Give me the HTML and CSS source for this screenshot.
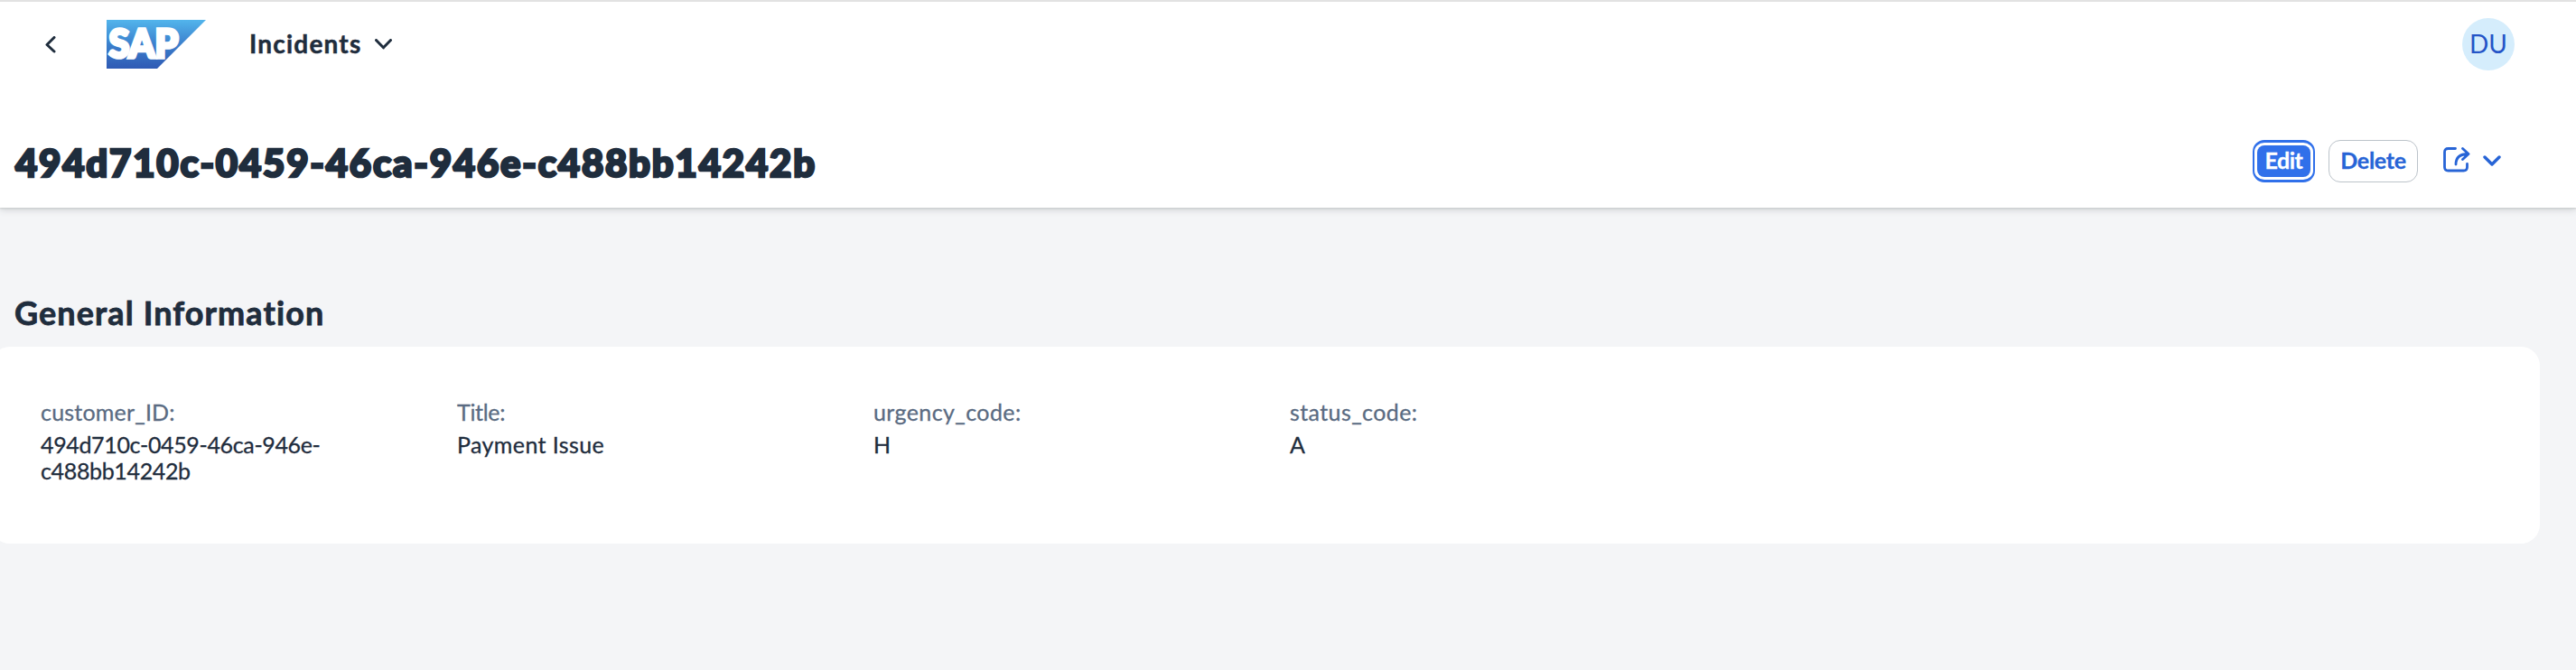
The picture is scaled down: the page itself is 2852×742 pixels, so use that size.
FILE: index.html
```html
<!DOCTYPE html>
<html lang="en">
<head>
<meta charset="utf-8">
<title>Incidents</title>
<link rel="stylesheet" href="styles.css">
</head>
<body>
<header class="shell">
  <svg class="back" width="12" height="19" viewBox="0 0 12 19"><path d="M10 1.500 2 9.500l8 7.500"/></svg>
  <svg class="logo" width="110" height="54" viewBox="0 0 110 54">
    <defs><linearGradient id="sky" x1="0" y1="0" x2="0" y2="1"><stop offset="0" stop-color="#52b5ec"/><stop offset=".5" stop-color="#3b80cd"/><stop offset="1" stop-color="#2f5ab4"/></linearGradient></defs>
    <path d="M0 0h110L56 54H0z" fill="url(#sky)"/>
    <text class="logo-text" x="2.500" y="42" textLength="77" lengthAdjust="spacingAndGlyphs">SAP</text>
  </svg>
  <span class="app-name">Incidents</span>
  <svg class="nav-arrow" width="19" height="12" viewBox="0 0 19 12"><path d="M1.500 1.500 9.500 9.800l8-8.300"/></svg>
  <span class="avatar">DU</span>
</header>
<section class="object-header">
  <h1 class="object-title">494d710c-0459-46ca-946e-c488bb14242b</h1>
  <div class="actions">
    <button class="btn btn-edit"><span>Edit</span></button>
    <button class="btn btn-delete">Delete</button>
    <svg class="share" width="30" height="28" viewBox="0 0 30 28"><path d="M13.500 1.500H5.500Q1.500 1.500 1.500 5.500V22Q1.500 26 5.500 26H22.500Q26.500 26 26.500 22V18.500M14 19C14 12 18 7.500 27.500 7.500M21.500 1.500l6.500 6-6.500 6"/></svg>
    <svg class="menu-arrow" width="20" height="13" viewBox="0 0 20 13"><path d="M2 2l8 8 8-8"/></svg>
  </div>
</section>
<main class="content">
  <h2 class="section-title">General Information</h2>
  <div class="card">
    <div class="field"><span class="label label-customer">customer_ID:</span><span class="value value-id">494d710c-0459-46ca-946e-c488bb14242b</span></div>
    <div class="field"><span class="label label-title">Title:</span><span class="value value-title">Payment Issue</span></div>
    <div class="field"><span class="label">urgency_code:</span><span class="value">H</span></div>
    <div class="field"><span class="label">status_code:</span><span class="value">A</span></div>
  </div>
</main>
</body>
</html>
```

FILE: styles.css
```css
* { box-sizing: border-box; }
body { margin: 0; height: 742px; overflow: hidden; background: #f4f5f7; color: #1f2d3d; font-family: Lato, sans-serif; }
h1, h2 { margin: 0; }
svg { flex: none; fill: none; stroke-linecap: round; stroke-linejoin: round; }
.shell { position: relative; z-index: 1; display: flex; align-items: center; height: 98px; padding: 0 68px 2px 50px; background: #fff; border-top: 2px solid #e2e2e2; }
.back, .nav-arrow { stroke: #1f2d3d; stroke-width: 3; }
.logo { margin-left: 56px; overflow: visible; }
.logo-text { font: 900 43px/1 Lato, sans-serif; fill: #fff; stroke: #fff; stroke-width: 3.6; stroke-linejoin: miter; }
.app-name { margin: -2px 0 0 48px; width: 127px; font-size: 28px; font-weight: 700; line-height: 34px; letter-spacing: 1.2px; white-space: nowrap; -webkit-text-stroke: .5px #1f2d3d; }
.nav-arrow { margin-left: 12px; }
.avatar { margin-left: auto; width: 58px; height: 58px; border-radius: 50%; background: #d5edfc; color: #2454c7; font-size: 28px; line-height: 56px; text-align: center; }
.object-header { position: relative; display: flex; height: 132px; padding: 57px 83px 0 17px; background: #fff; box-shadow: 0 1px 2px #c8caca, 0 3px 7px #d4d7da; }
.object-title { font-size: 42px; font-weight: 900; line-height: 50px; letter-spacing: 1.75px; white-space: nowrap; -webkit-text-stroke: 2.6px #1f2d3d; }
.actions { display: flex; height: 47px; margin-left: auto; align-items: center; }
.btn { height: 47px; padding: 0; border-radius: 13px; font: 700 25px/30px Lato, sans-serif; white-space: nowrap; }
.btn-edit { width: 69px; padding: 2px; border: 2px solid #3070ea; border-top-width: 3px; border-bottom-width: 3px; background: #fff; color: #fff; }
.btn-edit span { display: flex; align-items: center; justify-content: center; width: 59px; height: 35px; margin: auto; padding-bottom: 3px; border-radius: 8px; background: #3070ea; letter-spacing: -.5px; -webkit-text-stroke: .3px #fff; }
.btn-delete { width: 99px; margin-left: 15px; padding-bottom: 3px; border: 1px solid #bcc3ca; background: #fff; color: #2764d6; letter-spacing: -.3px; -webkit-text-stroke: .3px #2764d6; }
.share { margin: -4px 0 0 28px; stroke: #2764d6; stroke-width: 2.8; }
.menu-arrow { margin-left: 14px; stroke: #2764d6; stroke-width: 3.4; }
.content { padding-top: 91px; }
.section-title { padding-left: 16px; font-size: 36px; font-weight: 700; line-height: 50px; letter-spacing: 1.1px; white-space: nowrap; -webkit-text-stroke: .8px #1f2d3d; }
.card { display: flex; width: 2822px; height: 218px; margin: 13px 0 0 -10px; padding: 56px 55px 0; border-radius: 21px; background: #fff; }
.field { display: flex; flex-direction: column; width: 461px; padding-right: 130px; }
.label, .value { font-size: 25px; -webkit-text-stroke: .3px currentColor; }
.label { line-height: 32px; color: #5a6b82; letter-spacing: .4px; white-space: nowrap; }
.label-customer { letter-spacing: .2px; }
.label-title { letter-spacing: -.3px; }
.value { margin-top: 6px; line-height: 29px; }
.value-id { letter-spacing: -.35px; }
.value-title { letter-spacing: .4px; }
```
